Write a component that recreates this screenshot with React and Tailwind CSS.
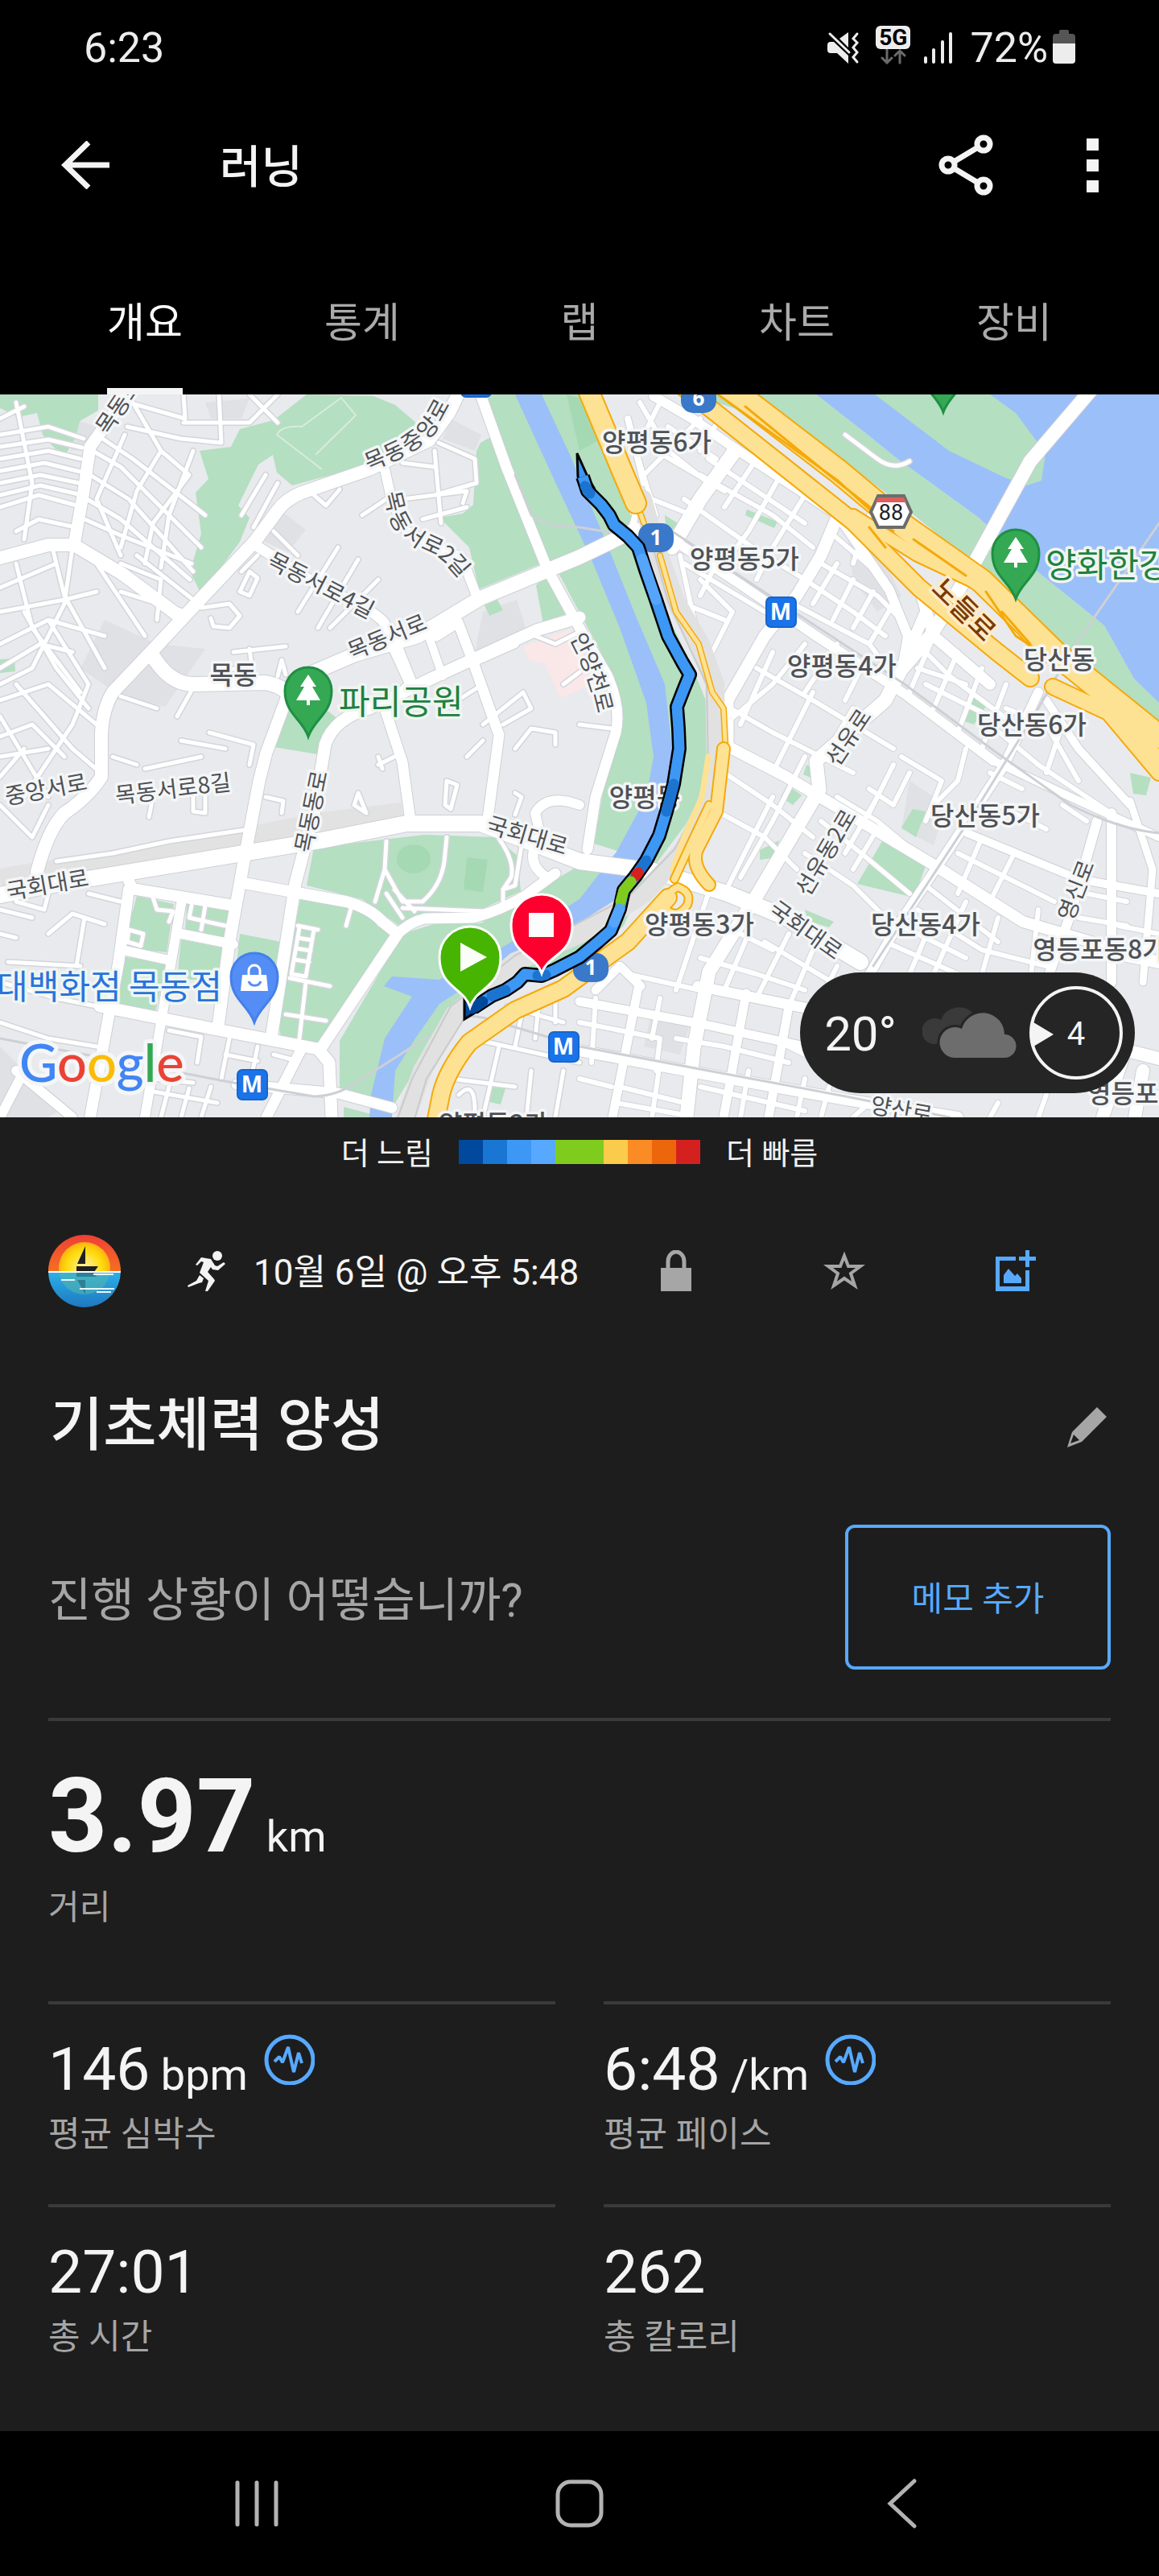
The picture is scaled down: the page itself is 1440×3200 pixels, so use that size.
import React from "react";

const KR = "font-['Roboto','Noto_Sans_CJK_KR',sans-serif]";

const PARKS = [
  "0,490 122,490 122,510 99,523 94,543 83,562 69,558 53,540 46,513 23,518 0,507",
  "381,490 464,492 491,503 519,527 459,577 363,603 344,587 339,565 321,577 296,628 310,643 298,673 250,738 236,710 250,663 243,612 259,595 248,560 287,555 298,533 340,522",
  "606,490 729,490 780,630 821,747 858,823 881,880 881,964 855,1020 816,1072 738,1048 757,940 773,897 748,813 693,710 680,697 595,732 583,680 546,643 575,638 588,627 592,560 597,550 615,540",
  "666,727 689,707 702,763 675,775",
  "363,870 399,877 420,893 395,937 340,928",
  "390,1053 528,1037 615,1040 643,1063 647,1107 597,1130 537,1133 496,1150 450,1117 381,1100",
  "374,1113 432,1123 459,1133 487,1163 395,1295 349,1287 344,1263",
  "170,1113 216,1123 207,1183 152,1177",
  "232,1123 289,1130 280,1167 230,1157",
  "152,1188 207,1197 193,1257 142,1247",
  "225,1167 280,1178 271,1217 220,1217",
  "298,1160 349,1170 340,1207 294,1197",
  "500,1160 542,1147 597,1147 720,1075 800,1092 775,1150 720,1200 565,1250 505,1347 487,1377 422,1360 422,1293",
  "427,1375 465,1385 465,1388 427,1388",
  "858,490 1014,490 1078,540 1115,570 1161,603 1216,643 1289,710 1372,777 1409,843 1440,873 1440,900 1317,803 1225,713 1115,623 995,533",
  "922,550 940,556 1000,600 990,608",
  "928,633 966,648 962,656 926,640",
  "826,640 842,650 838,664 828,662",
  "1197,875 1215,862 1226,876 1210,900 1195,895",
  "1099,1040 1110,1035 1152,1070 1136,1115 1065,1098",
  "970,990 978,975 996,988 985,1000",
  "1134,1005 1150,1008 1138,1040 1120,1028",
  "1002,950 1022,960 1016,970 998,962",
  "1404,960 1430,966 1424,988 1408,986",
  "944,1056 968,1044 960,1066 944,1068",
  "1000,1130 1036,1145 1030,1152 1004,1144",
  "606,1345 628,1352 622,1372 604,1368",
  "602,752 618,745 625,758 608,765",
  "0,819 18,818 19,834 0,836",
];

const SHADES = [
  "350,635 380,658 358,686 318,668",
  "560,520 598,540 590,560 550,545",
  "130,770 195,800 255,806 205,878 150,865 100,830",
  "600,760 642,745 655,785 590,810",
  "1050,640 1075,650 1120,740 1090,760 1060,720",
  "0,1300 40,1340 78,1377 60,1388 0,1388",
  "1130,970 1175,1000 1160,1050 1120,1030",
  "810,1255 860,1265 845,1310 800,1300",
  "90,520 120,530 105,558 88,560",
  "255,500 310,495 300,520 262,520",
];

const MAIN_ROADS = [
  ["M569 490 L558 513 L533 547 L459 583 L375 612 Q355 620 345 634 L317 672 L253 740 L197 800 L140 860 Q128 880 126 910 L126 965 Q110 990 80 1010 Q60 1030 46 1083", 16],
  ["M158 490 L112 555 L104 610 L92 677", 15],
  ["M0 693 L60 677 L92 677 L152 713 L225 767", 16],
  ["M188 812 Q210 850 240 850 L330 848 Q350 852 358 862 L390 835 L441 813 L519 790 L597 743 L720 692 L790 658", 18],
  ["M317 677 L400 730 Q470 760 478 775 L492 800 L512 850", 13],
  ["M478 583 L487 623 L505 660 L574 693 L592 740", 12],
  ["M597 490 L629 580 L680 707 L720 780 L755 840 Q772 880 765 910 L740 990 L730 1055", 13],
  ["M0 1112 L60 1100 L399 1044 L505 1023 L597 1023 L643 1040 L720 1070 L812 1082 L904 1110 L977 1140 L1069 1195", 20],
  ["M720 767 L666 783 L542 840 L459 880 Q415 892 404 925 L390 1010 L367 1097 L337 1290", 15],
  ["M358 862 L331 935 L322 970 L303 1070 L285 1170 L271 1275", 15],
  ["M303 1097 L430 1120 Q460 1128 475 1145 L494 1160 L399 1302", 14],
  ["M494 1160 Q510 1145 528 1141 L588 1140 Q620 1132 652 1113 L690 1085", 13],
  ["M156 1083 L164 1104 L285 1124", 14],
  ["M160 1105 L147 1197 L112 1388", 14],
  ["M124 1250 L275 1280 L395 1303 L409 1320 L412 1388", 15],
  ["M225 1123 L200 1270 L180 1388", 12],
  ["M152 1180 L211 1193 M225 1160 L290 1173", 12],
  ["M376 1300 L331 1388 M294 1347 L420 1358 L487 1376", 13],
  ["M20 1330 L90 1388 M0 1388 L30 1330", 12],
  ["M487 800 L510 850 L478 880 L500 947 L510 1020", 13],
  ["M542 790 L569 773 L588 823 L620 913 L606 1017", 13],
  ["M534 794 L550 840 M588 823 L640 800", 10],
  ["M674 1050 L665 1010 Q680 985 720 1000 M680 1090 Q655 1075 665 1050", 12],
  ["M780 520 L800 600 M780 663 Q796 640 786 610 L740 500", 8],
  ["M1368 470 L1280 573 L1202 715 L1156 790 L1119 833 L1100 870 L1014 945 L1018 981 L940 1113 L881 1207 L862 1302 L853 1388", 17],
  ["M913 560 L870 620 L835 680", 18],
  ["M1041 640 L1020 690 L990 740 L950 790 L904 870 L904 930", 15],
  ["M812 492 L860 520 L913 557 L1041 640 L1105 733 L1128 790 L1120 835", 12],
  ["M1145 740 L1160 790 L1230 850 M1150 760 L1120 830", 14],
  ["M835 670 L920 726 L1014 790 L1124 862 L1234 945", 12],
  ["M900 925 L977 965 L1161 1075 L1271 1145 L1440 1195", 14],
  ["M1290 860 L1248 950 L1179 1055 L1115 1150 L1075 1220", 12],
  ["M1202 1035 L1340 1092 L1440 1110", 10],
  ["M1381 1010 L1381 1220 M1363 1020 L1331 1133 L1300 1220", 12],
  ["M1404 995 L1432 1080 L1420 1220", 9],
  ["M867 1225 L1010 1254 L1060 1262", 13],
  ["M720 1244 L872 1272 L1000 1300", 11],
  ["M1234 945 L1330 990 L1440 1040 M1300 870 L1340 930 L1404 1000", 10],
  ["M927 1234 L899 1388 M980 1250 L955 1388 M793 1227 L761 1388 M740 1230 L770 1200 L796 1225", 11],
  ["M720 1305 L880 1335 L1051 1366 L1190 1388", 14],
  ["M1380 1300 L1440 1315 M1400 1300 L1370 1388 M1420 1330 L1410 1388", 16],
];

const SMALL_ROADS = [
  "M0 540 L60 530 L104 545 M0 570 L60 560 L100 570 M0 600 L50 590 L98 600 M0 630 L48 615 L96 628 M20 660 L48 645 L94 655 M20 500 L40 600 L30 670 M0 520 L30 505",
  "M0 555 L60 546 L102 556 M0 585 L55 575 L100 586 M0 615 L50 603 L98 614",
  "M160 500 L230 520 L228 490 M158 530 L225 545 L275 550 L272 490 M228 525 L310 525 L345 490 M310 490 L345 525",
  "M115 560 L150 580 L250 680 M112 590 L160 620 L240 710 M108 620 L150 645 L236 720 M105 645 L150 665 L238 700 M120 540 L165 570 L255 640",
  "M165 500 L200 560 L170 610 L150 680 M200 560 L235 590 L190 650 L180 700 M155 540 L120 620 L150 690 M240 560 L210 640 L200 705",
  "M65 680 L80 740 L130 830 M90 680 L80 750 L40 830 L0 850 M0 760 L80 745 L120 735 M0 730 L70 700 M20 700 L40 780 L100 860",
  "M0 800 L60 770 L130 790 M60 770 L110 850 L90 900 L30 990 M0 870 L60 850 L120 900 M0 890 L60 990 M20 850 L90 930 L125 960 M0 940 L60 930 M0 1000 L40 1040 L60 1000",
  "M30 760 L70 830 L110 880 M0 830 L50 800 L90 810 M0 915 L40 900 L80 940 M0 965 L30 930",
  "M150 700 L200 720 L195 770 M170 690 L240 745 M150 735 L230 760 M120 700 L180 790",
  "M315 655 L345 600 M330 590 L300 640 M390 615 L405 628 L422 608 M450 640 L480 620",
  "M545 550 L590 570 L592 600 L540 615 M540 560 L548 650 M500 575 L540 580 M500 620 L580 610 L575 625 M525 645 L580 630",
  "M370 760 L420 680 M395 780 L445 695 M410 780 L470 720 M300 710 L320 690 M340 660 L370 690",
  "M250 755 L285 750 L298 765 L285 780 L265 778 L262 768 M290 810 L355 803 M310 806 L313 830 L270 832",
  "M310 710 L320 718 L310 740 L298 735 Z M345 840 L350 820 L355 838",
  "M220 890 L245 845 M150 865 L195 880 M225 920 L280 930 M260 910 L315 925 L310 950 M140 940 L170 950 M180 955 L250 940 M190 990 L185 1015",
  "M240 985 L255 985 L255 1010 L240 1008 Z M330 990 L352 995 L350 1010 M70 1070 L140 1060 L210 1045 L310 1030",
  "M470 950 L500 935 M475 955 L470 940 M555 970 L568 975 L560 1005 L553 1000 Z M440 1000 L445 985 L455 1010 Z M640 985 L648 990 L640 1012",
  "M480 1045 L478 1080 L466 1120 M478 1080 L500 1120 L525 1120 Q548 1100 552 1070 L555 1040 M480 1110 L500 1140 M490 1105 L515 1132",
  "M620 1042 Q640 1070 635 1090 L625 1105 L625 1125 L600 1132 L500 1128 M648 1050 L640 1100 L625 1105",
  "M370 1150 L395 1155 M372 1152 L362 1210 L380 1213 L390 1155 M370 1165 L388 1168 M368 1178 L386 1181 M366 1192 L384 1195",
  "M360 1215 L410 1225 M355 1260 L405 1268 M380 1220 L372 1290 M437 1125 L430 1150",
  "M190 1115 L195 1130 L215 1132 L210 1145 M238 1125 L235 1140 L280 1150 M255 1125 L250 1155 M160 1155 L178 1160 L175 1175 L158 1170 Z",
  "M0 1130 L40 1140 M60 1160 L90 1135 L130 1148 M20 1120 L55 1130 L60 1110 M110 1110 L150 1120 M0 1160 L20 1165 M10 1195 L100 1200 M105 1140 L95 1200 M0 1220 L70 1240 L120 1250",
  "M210 1280 L250 1288 L245 1320 M285 1290 L275 1340 M320 1300 L312 1340 M280 1310 L320 1318 M340 1310 L370 1318 M190 1340 L240 1345 M0 1270 L60 1290 L120 1300",
  "M185 1355 L270 1370 M210 1350 L200 1388 M235 1352 L225 1388 M262 1350 L250 1388",
  "M585 1290 L720 1320 M560 1340 L640 1350 M620 1300 L600 1388 M650 1250 L640 1300 M670 1240 L665 1290 M690 1230 L690 1270 M660 1330 L655 1380 M700 1330 L690 1388",
  "M630 1250 L700 1270 M570 1360 Q590 1340 590 1380",
  "M600 900 L650 860 L660 880 L625 900 M640 930 L660 905 L690 910 L690 925 M545 885 L600 850 M580 940 L600 920",
  "M665 790 L690 800 L720 785 M700 850 L720 835 M720 900 L760 905",
  "M1050 540 L1090 570 Q1110 585 1130 573",
];

const EAST_STREETS = [
  "M795 500 L830 560 L880 600 M820 500 L790 560 L815 640 M800 590 L870 520 M815 560 L900 610 M830 530 L890 570 M810 620 L860 640 M900 510 L870 560",
  "M870 590 L960 640 L1010 680 M850 620 L935 680 L1000 720 M880 570 L1000 650 M940 570 L900 630 M970 590 L930 660 L900 700 M1000 615 L960 680 L940 720",
  "M845 690 L860 760 L880 840 M850 750 L900 770 M870 720 L910 760 L880 820 M850 700 L950 760 M890 700 L870 740",
  "M985 750 L1080 800 L1110 840 M1000 720 L1060 760 L1100 790 M1020 700 L1090 740 L1120 770 M1030 660 L1100 720",
  "M1010 750 L1040 700 M1035 770 L1060 720 M1060 780 L1085 735 M1080 800 L1110 750 M1040 800 L1000 860 M1075 820 L1050 870 M940 830 L1010 870 L1110 930",
  "M890 870 L960 910 L1060 960 M960 810 L920 900 M1010 860 L980 920 L960 960 M1060 880 L1030 930 M900 900 L960 850 L1000 800",
  "M1080 640 L1060 700 M1140 800 L1180 840 L1260 900 M1150 850 L1230 890 M1160 790 L1130 860 M1190 810 L1160 880 M1220 830 L1190 910 M1250 850 L1220 930",
  "M1130 870 L1180 900 M1140 830 L1200 850 M1250 880 L1300 900 L1340 970 M1230 900 L1290 950 L1380 1010 M1320 900 L1300 960",
  "M900 960 L960 1000 L1010 1040 M895 1010 L950 1040 L990 1080 M960 990 L930 1050 L905 1100 M1000 940 L960 1020 L920 1090",
  "M1040 990 L1090 1020 L1150 1070 M1020 1020 L1070 1060 L1130 1110 M1000 1060 L1060 1100 L1110 1150 M1090 990 L1050 1060 M1110 950 L1080 1010 M1060 1080 L1090 1030",
  "M1120 940 L1170 970 L1150 1020 M1080 980 L1110 1000 L1130 960 M1200 930 L1190 970 L1160 1000 M1230 960 L1270 980 M1240 1000 L1300 1030 M1320 1000 L1350 1020",
  "M1190 1060 L1250 1090 L1310 1120 M1180 1090 L1240 1130 M1150 1100 L1240 1170 M1140 1130 L1220 1180 L1300 1200 M1220 1040 L1190 1110 M1260 1060 L1230 1120 M1200 1120 L1160 1210 M1240 1140 L1220 1210",
  "M1100 1170 L1190 1210 M1120 1150 L1200 1190 M1160 1140 L1130 1210 M1290 1130 L1280 1220 M1350 1110 L1400 1120 M1340 1140 L1400 1150 M1390 1150 L1440 1160 M1390 1190 L1440 1200",
  "M880 1110 L840 1230 M900 1150 L960 1180 M870 1190 L940 1210 L1000 1230 M930 1160 L900 1230 M980 1160 L940 1240 M1010 1180 L980 1250 M1040 1200 L1010 1260 M950 1170 L1050 1230 M780 1210 L870 1230",
  "M720 1270 L820 1290 L815 1330 M740 1240 L735 1320 M820 1240 L810 1290 M720 1340 L760 1350 M840 1290 L900 1300 L980 1320 M770 1350 L850 1370 M765 1370 L850 1385 M870 1290 L860 1330 M960 1290 L1000 1310",
  "M870 1350 L1000 1380 M1000 1340 L990 1388 M1030 1350 L1020 1388 M1080 1370 L1060 1388 M930 1330 L920 1388 M820 1320 L810 1388 M1240 1370 L1230 1388 M1300 1360 L1290 1388",
];

const HIGHWAYS = [
  ["M729 480 L750 530 L775 590 L790 625", 24],
  ["M904 480 L1041 585 L1125 655 L1220 722 L1312 812 L1440 915", 28],
  ["M848 480 L968 575 L1060 648 L1142 730 L1239 810 L1280 842", 20],
  ["M1060 640 L1140 690 L1225 730 L1300 815", 14],
  ["M1308 853 L1377 885 L1440 960", 18],
  ["M1375 880 L1440 940", 14],
  ["M899 930 L890 1008 L866 1055 Q858 1075 881 1099", 14],
  ["M881 1000 L862 1040 L838 1092", 8],
  ["M830 1115 L780 1170 L752 1190 L700 1228 L640 1255 L583 1295 Q555 1330 548 1360 L540 1400", 20],
  ["M842 1102 Q860 1108 854 1124 Q842 1142 828 1130 Q822 1112 842 1102", 8],
];

const RIVER = [
  "640,490 673,490 709,567 761,693 789,763 826,850 835,930 834,975 812,1050 790,1090 765,1125 720,1150 643,1195 574,1229 546,1247 514,1293 491,1330 487,1388 459,1388 461,1360 478,1290 512,1238 477,1225 487,1213 546,1217 624,1177 720,1117 766,1058 803,990 812,940 803,873 770,780 734,693 689,597",
  "1014,490 1078,540 1115,570 1161,603 1216,643 1289,710 1372,777 1409,843 1440,873 1440,490",
];

const ROUTE =
  "M724 592 L730 610 L747 627 L757 640 L763 652 L780 666 L793 680 L802 708 L815 745 L830 790 L848 823 L857 838 L850 855 L841 878 L843 905 L844 930 L837 974 L828 1008 L819 1038 L803 1069 L789 1089 L775 1106 L770 1129 L759 1156 L743 1170 L720 1189 L689 1205 L673 1212 L652 1210 L643 1220 L628 1230 L611 1237 L588 1252";

const ROUTE_PARTS = [
  ["M727 604 L733 613", "#1c74d0"],
  ["M798 694 L808 724 L815 745", "#55a5fb"],
  ["M837 974 L832 994 L828 1008", "#1c74d0"],
  ["M803 1069 L797 1078", "#1c74d0"],
  ["M793 1084 L790 1088", "#d6211f"],
  ["M784 1095 L775 1106 L771 1120", "#80cc1e"],
  ["M770 1129 L763 1146", "#55a5fb"],
  ["M678 1211 L668 1212", "#1c74d0"],
  ["M628 1230 L611 1237", "#1c74d0"],
  ["M600 1244 L586 1253", "#00499c"],
];

const PLACES = [
  [816, 561, "양평동6가"],
  [925, 706, "양평동5가"],
  [1046, 839, "양평동4가"],
  [1316, 831, "당산동"],
  [1282, 912, "당산동6가"],
  [1224, 1025, "당산동5가"],
  [1150, 1160, "당산동4가"],
  [869, 1160, "양평동3가"],
  [801, 1002, "양평동"],
  [1366, 1191, "영등포동8가"],
  [1410, 1370, "영등포동"],
  [290, 850, "목동"],
  [613, 1408, "양평동2가"],
];

const STREET_NAMES = [
  ["n1", "M110 560 L185 448", "목동로"],
  ["n2", "M436 584 L487 562 Q518 548 534 528 L560 480", "목동중앙로"],
  ["n3", "M482 590 L494 640 Q502 664 530 674 Q562 684 590 730", "목동서로2길"],
  ["n4", "M318 685 L480 769", "목동서로4길"],
  ["n5", "M420 816 L542 766", "목동서로"],
  ["n6", "M-10 993 L124 968", "중앙서로"],
  ["n7", "M132 990 L298 970", "목동서로8길"],
  ["n8", "M-4 1110 L122 1088", "국회대로"],
  ["n9", "M594 1020 L716 1056", "국회대로"],
  ["n10", "M374 1072 L400 944", "목동동로"],
  ["n11", "M712 780 Q742 830 754 894", "안양천로"],
  ["n12", "M1018 970 L1090 862", "선유로"],
  ["n13", "M984 1130 L1068 988", "선유동2로"],
  ["n14", "M944 1115 L1058 1196", "국회대로"],
  ["n15", "M1318 1156 L1356 1056", "영신로"],
  ["n16", "M1070 1370 L1170 1388", "양산로"],
];

function Pin({ x, y, r, drop, fill, stroke, children }) {
  const d = `M${x - r} ${y} A${r} ${r} 0 1 1 ${x + r} ${y} C${x + r} ${y + r} ${x + 8} ${y + drop * 0.6} ${x} ${y + drop} C${x - 8} ${y + drop * 0.6} ${x - r} ${y + r} ${x - r} ${y} Z`;
  return (
    <g>
      <path d={d} fill={fill} stroke={stroke} strokeWidth="3" />
      {children}
    </g>
  );
}

function Tree({ x, y }) {
  return (
    <path
      fill="#fff"
      d={`M${x} ${y - 18} l10 15 h-5 l10 17 h-13 v6 h-4 v-6 h-13 l10 -17 h-5 Z`}
    />
  );
}

function Metro({ x, y }) {
  return (
    <g>
      <rect x={x - 18} y={y - 18} width="37" height="37" rx="6" fill="#1a73e8" stroke="#1765cc" strokeWidth="2" />
      <text x={x} y={y + 10} textAnchor="middle" className="fill-white font-['Open_Sans'] text-[28px] font-bold">M</text>
    </g>
  );
}

function Shield({ x, y, label }) {
  return (
    <g>
      <rect x={x - 22} y={y - 18} width="44" height="36" rx="15" fill="#3a78c9" />
      <text x={x} y={y + 9} textAnchor="middle" className="fill-white font-['Open_Sans'] text-[26px] font-bold">{label}</text>
    </g>
  );
}

function MapView() {
  return (
    <svg viewBox="0 490 1440 898" className="block h-auto w-full bg-[#e8eaed]" role="img" aria-label="러닝 경로 지도">
      <rect x="0" y="490" width="1440" height="898" fill="#e8eaed" />
      {SHADES.map((p) => <polygon key={p} points={p} fill="#e0e1e5" />)}
      <polygon points="650,803 707,782 720,797 738,850 696,867 677,825 657,820" fill="#fae7e8" />
      {PARKS.map((p) => <polygon key={p} points={p} fill="#b4dfc1" />)}
      <ellipse cx="514" cy="1067" rx="21" ry="18" fill="#a5d9b3" />
      <polygon points="580,1065 606,1068 600,1108 576,1105" fill="#a5d9b3" />
      <polygon points="704,490 740,500 748,545 720,560" fill="#a5d9b3" />
      {RIVER.map((p) => <polygon key={p} points={p} fill="#9bbff9" />)}
      <polygon points="1087,490 1230,490 1262,513 1299,563 1294,597 1276,603 1248,593 1179,560" fill="#b4dfc1" />

      <path d="M0 1092 L120 1072 L303 1041 L400 1022 L500 1010" stroke="#e2e2e2" strokeWidth="26" fill="none" />
      <path d="M400 583 L344 540 Q350 528 375 530 L424 494 L442 516 L392 565" stroke="#d9ecd9" strokeWidth="2" fill="none" />

      <g fill="none" strokeLinejoin="round" strokeLinecap="round">
        {[...SMALL_ROADS, ...EAST_STREETS].map((d) => <path key={d} d={d} stroke="#d3d5da" strokeWidth="8" />)}
        {MAIN_ROADS.map(([d, w]) => <path key={d} d={d} stroke="#cdd0d6" strokeWidth={w + 2} />)}
        {SMALL_ROADS.map((d) => <path key={d} d={d} stroke="#fff" strokeWidth="5" />)}
        {EAST_STREETS.map((d) => <path key={d} d={d} stroke="#fff" strokeWidth="6" />)}
        {MAIN_ROADS.map(([d, w]) => <path key={d} d={d} stroke="#fff" strokeWidth={w} />)}
        <path d="M835 660 L1014 778 L1124 850 L1234 932 L1330 1000 Q1390 1030 1440 1035 M1440 650 L1330 810 L1290 880 L1210 1010 L1085 1200 M720 1300 L880 1330 L1051 1362 L1180 1388 M0 1290 L290 1345 L390 1362 Q420 1362 450 1340 L560 1270 Q580 1255 620 1270 L720 1300 M640 590 L660 640 Q680 655 720 655 L780 665" stroke="#cdd0d4" strokeWidth="3" />
        <path d="M798 620 L815 680 L839 747 L870 800 L888 850 L890 950 L878 1000 L850 1055 L800 1110 L720 1160 L640 1195 L565 1260 L525 1330 L500 1400" stroke="#e1e1e1" strokeWidth="24" />
        <path d="M800 640 L830 747 L878 850 L880 950 L868 1000 L838 1055 L780 1115 L640 1187 L560 1250 L512 1340 L490 1400 M580 1260 L530 1340 L512 1400" stroke="#cacaca" strokeWidth="2" />
        <path d="M782 600 L800 650 M820 690 L840 760 L868 800 L885 860 L899 880 L902 940" stroke="#f5a90a" strokeWidth="8" />
        <path d="M782 600 L800 650 M820 690 L840 760 L868 800 L885 860 L899 880 L902 940" stroke="#fee293" strokeWidth="5" />
        <path d="M880 940 L872 990 L850 1040 L836 1080" stroke="#fee293" strokeWidth="7" />
        {HIGHWAYS.map(([d, w]) => <path key={d} d={d} stroke="#f5a90a" strokeWidth={w + 4} />)}
        {HIGHWAYS.map(([d, w]) => <path key={d} d={d} stroke="#fee293" strokeWidth={w} />)}
        <path d="M892 490 L1041 597 L1110 660 M926 505 L1030 590 L1100 645 M1135 670 L1200 715 M1225 735 L1262 790 L1300 815 M1245 760 L1280 800 M1080 655 L1100 680" stroke="#f5a90a" strokeWidth="3" />
      </g>

      <g textAnchor="middle" paintOrder="stroke" stroke="#f4f6f7" strokeWidth="7" strokeLinejoin="round" fill="#4f5155" className="font-['Noto_Sans_CJK_KR',sans-serif]">
        {PLACES.map(([x, y, t]) => <text key={t} x={x} y={y} className="text-[32px] font-medium">{t}</text>)}
        {STREET_NAMES.map(([id, d, t]) => (
          <g key={id}>
            <path id={id} d={d} fill="none" stroke="none" />
            <text dy="10" className="text-[28px]"><textPath href={"#" + id} startOffset="50%">{t}</textPath></text>
          </g>
        ))}
        <path id="nodeul" d="M1142 704 L1252 812" fill="none" stroke="none" />
        <text dy="11" fill="#7a3a06" stroke="#fdebc6" className="text-[34px] font-medium"><textPath href="#nodeul" startOffset="50%">노들로</textPath></text>
      </g>
      <g paintOrder="stroke" stroke="#eff6f1" strokeWidth="7" strokeLinejoin="round" className="font-['Noto_Sans_CJK_KR',sans-serif] text-[42px]">
        <text x="421" y="887" fill="#1e8140">파리공원</text>
        <text x="1299" y="717" fill="#1e8140">양화한강공원</text>
        <text x="276" y="1241" textAnchor="end" fill="#2a73dc">현대백화점 목동점</text>
      </g>

      <Pin x={383} y={858} r={29} drop={57} fill="#34a853" stroke="#1f8f43"><Tree x={383} y={856} /></Pin>
      <Pin x={1262} y={687} r={29} drop={57} fill="#34a853" stroke="#1f8f43"><Tree x={1262} y={685} /></Pin>
      <Pin x={1172} y={455} r={29} drop={57} fill="#34a853" stroke="#1f8f43" />
      <Pin x={316} y={1213} r={29} drop={57} fill="#548df6" stroke="#4380ea">
        <path d="M301 1211 h30 l2 20 h-34 Z" fill="#fff" />
        <path d="M309 1212 v-6 a7 7 0 0 1 14 0 v6" fill="none" stroke="#fff" strokeWidth="3" />
        <path d="M309 1219 a8 8 0 0 0 15 0" fill="none" stroke="#548df6" strokeWidth="3" />
      </Pin>

      <Metro x={970} y={760} />
      <Metro x={313} y={1347} />
      <Metro x={700} y={1300} />
      <Metro x={591} y={474} />
      <Shield x={815} y={668} label="1" />
      <Shield x={868} y={495} label="6" />
      <Shield x={734} y={1202} label="1" />
      <polygon points="1091,616 1123,616 1132,636 1123,655 1091,655 1082,636" fill="#fff" stroke="#6c6c6c" strokeWidth="4" />
      <polygon points="1091,618 1123,618 1126,624 1088,624" fill="#db5f5c" />
      <text x="1107" y="646" textAnchor="middle" className="fill-[#222] font-['Roboto'] text-[27px]">88</text>

      <polygon points="717,563 731,594 738,606 724,610 718,592" fill="#3d97f4" stroke="#000" strokeWidth="3" />
      <polygon points="577,1266 577,1240 592,1240 600,1252" fill="#00499c" stroke="#000" strokeWidth="3" />
      <g fill="none" strokeLinejoin="round">
        <path d={ROUTE} stroke="#000" strokeWidth="18" />
        <path d={ROUTE} stroke="#3d97f4" strokeWidth="13" />
        {ROUTE_PARTS.map(([d, c]) => <path key={d} d={d} stroke={c} strokeWidth="13" strokeLinecap="round" />)}
      </g>

      <Pin x={584} y={1189} r={38} drop={62} fill="#46b400" stroke="#fff"><polygon points="572,1171 572,1207 605,1189" fill="#fafdf8" /></Pin>
      <Pin x={673} y={1149} r={38} drop={60} fill="#fe002e" stroke="#fff"><rect x="657" y="1134" width="31" height="30" fill="#fafdfb" /></Pin>

      <text x="24" y="1344" paintOrder="stroke" stroke="#f4f6f7" strokeWidth="10" strokeLinejoin="round" className="font-['Lato',sans-serif] text-[65px] font-medium">
        <tspan fill="#4285f4">G</tspan>
        <tspan fill="#ea4335">o</tspan>
        <tspan fill="#fbbc05">o</tspan>
        <tspan fill="#4285f4">g</tspan>
        <tspan fill="#34a853">l</tspan>
        <tspan fill="#ea4335">e</tspan>
      </text>
    </svg>
  );
}

function StatusBar() {
  return (
    <div className="flex h-[120px] items-center justify-between pr-[104px] pl-[104px] text-[#ededed]">
      <span className="text-[52px] leading-none">6:23</span>
      <div className="flex items-center">
        <svg width="42" height="42" viewBox="0 0 42 42" fill="#ededed" aria-label="무음">
          <path d="M2 17 Q2 13 6 13 H10 L28 30 V40 L14 27 H6 Q2 27 2 23 Z" />
          <path d="M17 9 L28 1 V20 Z" />
          <path d="M5 3 L29 26" stroke="#ededed" strokeWidth="3" strokeLinecap="round" />
          <path d="M39 3 L34 9 L39 14 L34 20 L39 26 L34 32 L39 38" fill="none" stroke="#ededed" strokeWidth="3" strokeLinecap="round" />
        </svg>
        <div className="-mt-2 ml-5 flex flex-col items-center">
          <span className="rounded-md bg-[#ededed] px-1 text-[28px] leading-[29px] font-bold text-black">5G</span>
          <svg width="32" height="19" viewBox="0 0 32 19" fill="none" stroke="#6a6a6a" strokeWidth="3" strokeLinecap="round">
            <path d="M8 1 V17 M2 11 L8 17 L14 11 M24 17 V2 M18 8 L24 2 L30 8" />
          </svg>
        </div>
        <svg className="ml-4" width="38" height="42" viewBox="0 0 38 42" stroke="#ededed" strokeWidth="4" strokeLinecap="round" aria-label="신호">
          <path d="M3 33 V38 M13 23 V38 M24 13 V38 M34 3 V38" />
        </svg>
        <span className="ml-5 text-[52px] leading-none">72%</span>
        <svg className="ml-1.5 -mt-1" width="28" height="44" viewBox="0 0 28 44" aria-label="배터리 72%">
          <path d="M8 3 Q8 1 10 1 H18 Q20 1 20 3 V6 H24 Q28 6 28 10 V18 H0 V10 Q0 6 4 6 H8 Z" fill="#555" />
          <path d="M0 18 H28 V39 Q28 43 24 43 H4 Q0 43 0 39 Z" fill="#ededed" />
        </svg>
      </div>
    </div>
  );
}

function AppBar() {
  return (
    <header className="flex h-[170px] items-center pr-[75px] pl-[76px]">
      <button type="button" aria-label="뒤로">
        <svg width="60" height="60" viewBox="0 0 60 60" fill="none" stroke="#f4f4f4" strokeWidth="7">
          <path d="M5 30 H60 M34 2 L5 30 L34 58" />
        </svg>
      </button>
      <h1 className="ml-[137px] flex-1 pt-1.5 text-[56px] leading-none font-medium text-[#f4f4f4]">러닝</h1>
      <button type="button" aria-label="공유">
        <svg width="68" height="76" viewBox="0 0 68 76" fill="none" stroke="#f4f4f4" strokeWidth="7">
          <circle cx="56" cy="12" r="8" />
          <circle cx="12" cy="38" r="8" />
          <circle cx="56" cy="64" r="8" />
          <path d="M19 34 L49 16 M19 42 L49 60" />
        </svg>
      </button>
      <button type="button" aria-label="더보기" className="ml-[116px] flex flex-col gap-[11px]">
        <i className="size-[15px] bg-[#f4f4f4]" />
        <i className="size-[15px] bg-[#f4f4f4]" />
        <i className="size-[15px] bg-[#f4f4f4]" />
      </button>
    </header>
  );
}

function Tabs() {
  const tabs = ["개요", "통계", "랩", "차트", "장비"];
  return (
    <nav className="grid h-[200px] grid-cols-5 px-[45px] text-[51px]" role="tablist">
      {tabs.map((t, i) => (
        <button key={t} type="button" role="tab" aria-selected={i === 0} className="flex justify-center">
          <span className={i === 0
            ? "flex h-full items-center border-b-8 border-[#f4f4f4] pt-8 text-white"
            : "flex h-full items-center border-b-8 border-transparent pt-8 text-[#aaaaaa]"}>{t}</span>
        </button>
      ))}
    </nav>
  );
}

function Weather() {
  return (
    <div className="absolute right-[30px] bottom-[30px] flex h-[150px] items-center rounded-full bg-[#252525] pr-[15px] pl-[30px] text-[#f4f4f4]">
      <span className="pt-1 text-[60px] leading-none">20°</span>
      <svg className="ml-[32px]" width="118" height="66" viewBox="0 0 118 66" aria-label="흐림">
        <path d="M16 47 A16 16 0 1 1 23 17 A24 24 0 0 1 64 10 V40 Z" fill="#3a3a3a" />
        <path d="M40 64 A19 19 0 1 1 49 28 A27 27 0 0 1 102 35 A14.500 14.500 0 0 1 102 64 Z" fill="#6d6d6d" stroke="#252525" strokeWidth="6" paintOrder="stroke" />
      </svg>
      <div className="relative ml-[15px] flex size-[116px] items-center justify-center rounded-full border-4 border-[#f4f4f4] pt-1 text-[40px]">
        <svg className="absolute -left-1" width="30" height="30" viewBox="0 0 30 30"><path d="M5 0 L30 15 L5 30 Q0 15 5 0" fill="#f4f4f4" /></svg>
        4
      </div>
    </div>
  );
}

function Legend() {
  return (
    <div className="flex h-[86px] items-center justify-center gap-[32px] text-[38px] leading-none text-[#f0f0f0]">
      <span className="pt-1">더 느림</span>
      <div className="flex h-[30px]">
        <i className="w-[30px] bg-[#00499c]" />
        <i className="w-[30px] bg-[#1976d2]" />
        <i className="w-[30px] bg-[#3d97f4]" />
        <i className="w-[30px] bg-[#57a9ff]" />
        <i className="w-[60px] bg-[#80cc1e]" />
        <i className="w-[30px] bg-[#fbcb4b]" />
        <i className="w-[30px] bg-[#fb8b24]" />
        <i className="w-[30px] bg-[#ec670c]" />
        <i className="w-[30px] bg-[#d52020]" />
      </div>
      <span className="pt-1">더 빠름</span>
    </div>
  );
}

function Avatar() {
  return (
    <svg width="90" height="90" viewBox="0 0 90 90" aria-label="프로필">
      <defs>
        <clipPath id="disc"><circle cx="45" cy="45" r="45" /></clipPath>
        <linearGradient id="sky" x1="0" y1="0" x2="0" y2="1"><stop offset="0" stopColor="#ee4036" /><stop offset="1" stopColor="#f57020" /></linearGradient>
        <linearGradient id="sea" x1="0" y1="0" x2="0" y2="1"><stop offset="0" stopColor="#2bb1ea" /><stop offset="1" stopColor="#1f77bf" /></linearGradient>
        <radialGradient id="sun"><stop offset="0" stopColor="#fff3a8" /><stop offset="0.700" stopColor="#ffda08" /><stop offset="1" stopColor="#fbb116" /></radialGradient>
      </defs>
      <g clipPath="url(#disc)">
        <rect width="90" height="46" fill="url(#sky)" />
        <circle cx="45" cy="41" r="32" fill="url(#sun)" />
        <rect y="46" width="90" height="44" fill="url(#sea)" />
        <path d="M14 46 A31 28 0 0 0 76 46 Z" fill="#52b6ae" opacity="0.600" />
        <path d="M46 14 V36 H36 Z M35 39 H62 L57 46 H35 Z" fill="#231f20" />
        <path d="M35 47 H57 L60 52 H35 Z M36 56 H46 V74 Z" fill="#2e7f96" />
        <path d="M0 46 H90" stroke="#fff" strokeWidth="2" />
        <path d="M56 49 H81 M16 56 H33 M39 67 H82 M60 71 H78" stroke="#e8f6fd" strokeWidth="2" />
      </g>
    </svg>
  );
}

function ActivityRow() {
  return (
    <div className="mt-[60px] flex h-[90px] items-center">
      <Avatar />
      <svg className="ml-[82px]" width="48" height="52" viewBox="0 0 48 52" fill="#f4f4f4" aria-label="러닝">
        <circle cx="38" cy="7" r="6" />
        <path d="M18 9 L30 11 L35 19 L38 20 L46 15 L48 17 L39 25 L32 24 L30 21 L26 27 L34 36 L35 38 L26 51 L23 51 L27 38 L16 28 L21 15 L18 14 L13 19 L11 18 Z" />
        <path d="M16 31 L21 35 L19 40 L15 41 L2 46 L1 44 L12 38 Z" />
      </svg>
      <span className="ml-[35px] pt-1 text-[44px] leading-none text-[#f4f4f4]">10월 6일 @ 오후 5:48</span>
      <div className="ml-auto flex items-center pr-[92px]">
        <button type="button" aria-label="비공개">
          <svg width="40" height="52" viewBox="0 0 40 52">
            <path d="M1 22 H39 V51 H1 Z" fill="#a6a6a6" />
            <path d="M10 24 V14 A10 12 0 0 1 30 14 V24" fill="none" stroke="#a6a6a6" strokeWidth="5" />
          </svg>
        </button>
        <button type="button" aria-label="즐겨찾기" className="ml-[163px]">
          <svg width="52" height="50" viewBox="0 0 52 50" fill="none" stroke="#a6a6a6" strokeWidth="4">
            <path d="M26 6 L31 19 H46 L34 28 L39 43 L26 34 L13 43 L18 28 L6 19 H21 Z" />
          </svg>
        </button>
        <button type="button" aria-label="사진 추가" className="ml-[161px]">
          <svg width="52" height="52" viewBox="0 0 52 52" fill="#57a9ff">
            <path d="M1 8 H26 V13 H6 V45 H38 V25 H43 V51 H1 Z" />
            <path d="M38 0 H43 V8 H51 V13 H43 V21 H38 V13 H30 V8 H38 Z" />
            <path d="M11 31 L17 23 L25 32 L28 29 L33 35 V41 H11 Z" />
          </svg>
        </button>
      </div>
    </div>
  );
}

function Pulse() {
  return (
    <button type="button" aria-label="차트 보기" className="mb-[28px] ml-5 self-end">
      <svg width="63" height="63" viewBox="0 0 63 63" fill="none" stroke="#57a9ff">
        <circle cx="32" cy="32" r="29" strokeWidth="5" />
        <path d="M13 34 L19 28 L23 35 L30 16 L37 47 L43 23 L47 36" strokeWidth="4" strokeLinejoin="bevel" />
      </svg>
    </button>
  );
}

function Stat({ value, unit, label, pulse }) {
  return (
    <div className="h-[252px] border-t-4 border-[#3a3a3a] pt-[32px]">
      <div className="flex h-[96px] items-end">
        <p className="text-[75px] leading-[96px] text-[#f4f4f4]">{value}{unit && <span className="text-[54px] leading-none"> {unit}</span>}</p>
        {pulse && <Pulse />}
      </div>
      <p className="mt-[9px] text-[43px] leading-[48px] text-[#a5a5a5]">{label}</p>
    </div>
  );
}

export default function App() {
  return (
    <div className={`w-full bg-black ${KR}`}>
      <StatusBar />
      <AppBar />
      <Tabs />
      <section className="relative overflow-hidden">
        <MapView />
        <Weather />
      </section>
      <main className="bg-[#1d1d1d] pb-[30px]">
        <Legend />
        <div className="px-[60px]">
          <ActivityRow />
          <div className="mt-[100px] flex h-[90px] items-center justify-between">
            <h2 className="pt-1 pl-[2px] text-[72px] leading-none font-medium text-[#f4f4f4]">기초체력 양성</h2>
            <button type="button" aria-label="제목 편집" className="mr-1 pt-2">
              <svg width="52" height="52" viewBox="0 0 52 52" fill="#a6a6a6">
                <path fillRule="evenodd" d="M39 1 L51 13 L20 44 L2 51 L8 32 Z M10 35 L6 46 L17 42 Z" />
              </svg>
            </button>
          </div>
          <div className="mt-[80px] flex items-center justify-between border-b-4 border-[#3a3a3a] pb-[60px]">
            <p className="pt-2 text-[58px] leading-none text-[#a5a5a5]">진행 상황이 어떻습니까?</p>
            <button type="button" className="h-[180px] w-[330px] rounded-xl border-4 border-[#57a9ff] pt-1 text-[42px] text-[#57a9ff]">메모 추가</button>
          </div>
          <div className="h-[348px] pt-[46px]">
            <p className="text-[128px] leading-[144px] font-bold text-[#f4f4f4]">3.97<span className="text-[54px] leading-none font-normal"> km</span></p>
            <p className="mt-[18px] text-[42px] leading-[48px] text-[#a5a5a5]">거리</p>
          </div>
          <div className="grid grid-cols-2 gap-x-[60px]">
            <Stat value="146" unit="bpm" label="평균 심박수" pulse />
            <Stat value="6:48" unit="/km" label="평균 페이스" pulse />
            <Stat value="27:01" label="총 시간" />
            <Stat value="262" label="총 칼로리" />
          </div>
        </div>
      </main>
      <footer className="flex h-[180px] items-center justify-between px-[288px]">
        <button type="button" aria-label="최근 앱" className="flex w-[62px] justify-center">
          <svg width="58" height="60" viewBox="0 0 58 60" stroke="#b3b3b3" strokeWidth="5" strokeLinecap="round"><path d="M5 4 V56 M29 4 V56 M53 4 V56" /></svg>
        </button>
        <button type="button" aria-label="홈" className="flex w-[62px] justify-center">
          <svg width="60" height="60" viewBox="0 0 60 60" fill="none" stroke="#b3b3b3" strokeWidth="5"><rect x="3" y="3" width="54" height="54" rx="16" /></svg>
        </button>
        <button type="button" aria-label="뒤로 가기" className="flex w-[62px] justify-center">
          <svg width="38" height="62" viewBox="0 0 38 62" fill="none" stroke="#b3b3b3" strokeWidth="5" strokeLinecap="round"><path d="M34 3 L4 31 L34 59" /></svg>
        </button>
      </footer>
    </div>
  );
}
